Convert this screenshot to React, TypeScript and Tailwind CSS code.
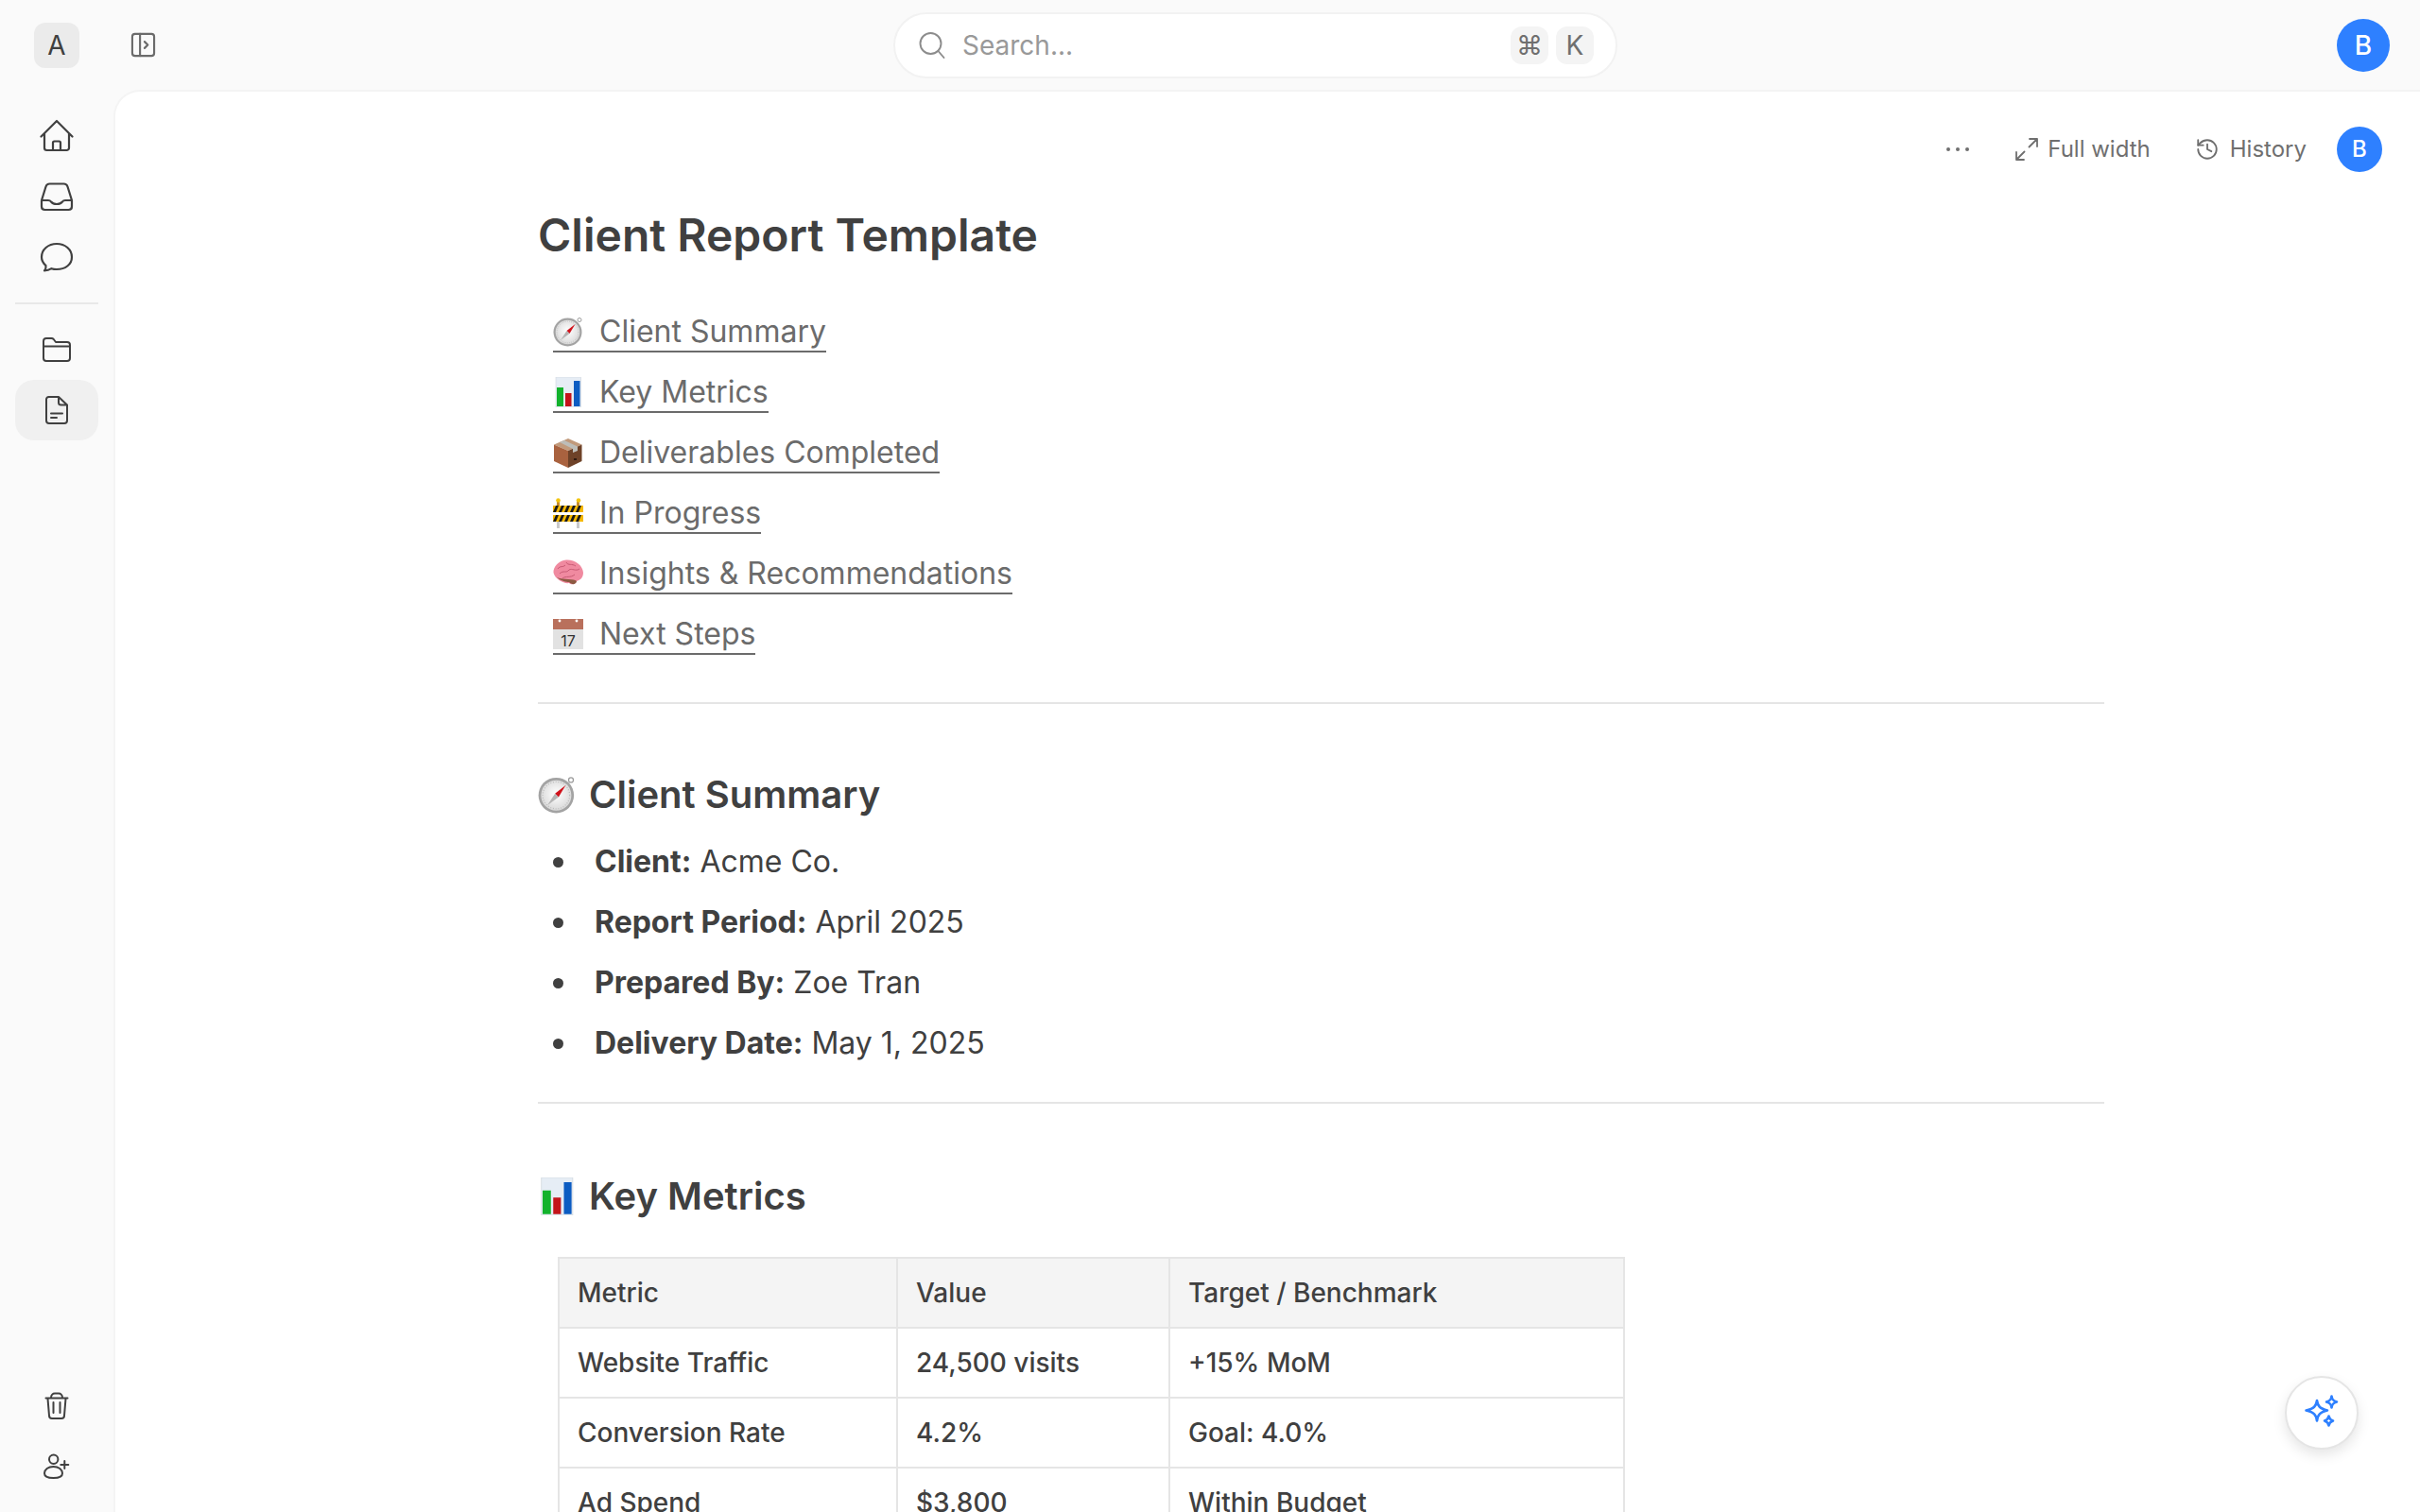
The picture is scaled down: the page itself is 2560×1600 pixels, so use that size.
import { History } from 'lucide-react';
import type { ReactNode } from 'react';

function Icon({ d, className = 'w-9 h-9 text-[#404040]', width = 2.2 }: { d: string; className?: string; width?: number }) {
  return (
    <svg viewBox="0 0 36 36" fill="none" stroke="currentColor" strokeWidth={width} strokeLinecap="round" strokeLinejoin="round" className={className}>
      <path d={d} />
    </svg>
  );
}

const homePath = 'M1.5 18.5 L18 2 L34.5 18.5 M5 15 V30.5 a2.5 2.5 0 0 0 2.5 2.5 H28.5 a2.5 2.5 0 0 0 2.5 -2.5 V15 M14 33 V25 a1.5 1.5 0 0 1 1.5 -1.5 H20.5 a1.5 1.5 0 0 1 1.5 1.5 V33';
const inboxPath = 'M2 22 L6.5 7.5 Q7.5 4.5 10.5 4.5 H25.5 Q28.5 4.5 29.5 7.5 L34 22 V28.5 Q34 32 30.5 32 H5.5 Q2 32 2 28.5 Z M2 22 H9 Q11 22 12 23.5 Q14 26 18 26 Q22 26 24 23.5 Q25 22 27 22 H34';
const chatPath = 'M18 4 C27 4 34 10 34 18 C34 26 27 31 18 31 C16 31 14 30.7 12.5 30.2 C10.5 31.5 8 32.5 5 32.5 C6.2 31 6.8 29 6.5 27 C3.8 24.7 2 21.6 2 18 C2 10 9 4 18 4 Z';
const folderPath = 'M4 14 V9 a3 3 0 0 1 3 -3 H12.5 a3 3 0 0 1 2.2 1 L17 10 H29 a3 3 0 0 1 3 3 V27 a3 3 0 0 1 -3 3 H7 a3 3 0 0 1 -3 -3 Z M4 14.5 H32';
const filePath = 'M9.5 4 H20 L29 12.5 V29 a3 3 0 0 1 -3 3 H10 a3 3 0 0 1 -3 -3 V6.5 a2.5 2.5 0 0 1 2.5 -2.5 Z M20 4 V10 a2.5 2.5 0 0 0 2.5 2.5 H29 M12 21.5 H24 M12 26 H18';
const trashPath = 'M6.5 9.5 H29.5 M12 9 C12 6 14 4.5 16 4.5 H20 C22 4.5 24 6 24 9 M8.5 10 L10 28 a3 3 0 0 0 3 3 H23 a3 3 0 0 0 3 -3 L27.5 10 M14.5 14 V25 M21.5 14 V25';
const userPlusPath = 'M14.7 5.6 a4.7 4.7 0 1 1 0 9.4 a4.7 4.7 0 1 1 0 -9.4 Z M5 25 C5 21 9 18 14.5 18 C20 18 24 21 24 25 C24 29 20 30 14.5 30 C9 30 5 29 5 25 Z M26.3 12 V20 M22.3 16 H30.3';

function CompassEmoji({ className }: { className: string }) {
  return (
    <svg viewBox="0 0 32 32" className={className}>
      <defs>
        <radialGradient id="face" cx="50%" cy="45%" r="55%">
          <stop offset="0%" stopColor="#ffffff" />
          <stop offset="100%" stopColor="#d9d9d9" />
        </radialGradient>
      </defs>
      <circle cx="28" cy="3.5" r="2" fill="none" stroke="#9a9a9a" strokeWidth="1" />
      <circle cx="15.5" cy="16.5" r="15" fill="#a3a3a3" />
      <circle cx="15.5" cy="16.5" r="12.8" fill="url(#face)" />
      <circle cx="15.5" cy="16.5" r="11.4" fill="none" stroke="#bdbdbd" strokeWidth="1" strokeDasharray="0.8 1.4" />
      <path d="M14.5 15 L23.5 8 L17.5 18 Z" fill="#d0121b" />
      <path d="M14.5 15 L17.5 18 L8 25 Z" fill="#b5b5b5" />
    </svg>
  );
}

function ChartEmoji({ className }: { className: string }) {
  return (
    <svg viewBox="0 0 32 32" className={className}>
      <rect x="3" y="0" width="26.5" height="32" fill="#e6edf5" stroke="#cfd6dd" strokeWidth="0.6" />
      <rect x="4" y="11" width="7" height="20" fill="#12b22c" />
      <rect x="13" y="17" width="6.5" height="14" fill="#c4141a" />
      <rect x="22" y="4" width="6.5" height="27" fill="#0c5cc2" />
    </svg>
  );
}

function BoxEmoji({ className }: { className: string }) {
  return (
    <svg viewBox="0 0 32 32" className={className}>
      <path d="M16 1 L30.5 7.5 L16 14 L1 7.5 Z" fill="#c19a7b" />
      <path d="M1 7.5 L16 14 V32 L1 25 Z" fill="#a9623f" />
      <path d="M30.5 7.5 V25 L16 32 V14 Z" fill="#6e4228" />
      <path d="M7 5 L12 3 L26 9.5 V14 L21 16 V12 Z" fill="#bdbdb8" />
      <rect x="22" y="22" width="3" height="2" fill="#2e1a10" />
    </svg>
  );
}

function BarrierEmoji({ className }: { className: string }) {
  const stripes = [0, 6, 12, 18, 24];
  return (
    <svg viewBox="0 0 32 32" className={className}>
      <rect x="4" y="22" width="3" height="10" fill="#c9c9c9" />
      <rect x="25" y="22" width="3" height="10" fill="#c9c9c9" />
      <rect x="4" y="2" width="3" height="6" fill="#c58a2a" />
      <rect x="25" y="2" width="3" height="6" fill="#c58a2a" />
      <circle cx="5.5" cy="2.5" r="2.3" fill="#f2c511" />
      <circle cx="27" cy="2.5" r="2.3" fill="#f2c511" />
      {[8, 18].map(y => (
        <g key={y}>
          <rect x="0" y={y} width="32" height="7" fill="#f5b800" />
          {stripes.map(x => (
            <path key={x} d={`M${x} ${y + 7} L${x + 3} ${y} H${x + 6} L${x + 3} ${y + 7} Z`} fill="#1a1a1a" />
          ))}
        </g>
      ))}
    </svg>
  );
}

function BrainEmoji({ className }: { className: string }) {
  return (
    <svg viewBox="0 0 32 32" className={className}>
      <path d="M0.5 15 C0 9 6 2 14 1.5 C23 1 31.5 7 32 15 C32 21 28 23 25 24 C24 28 19 28 17 26 C12 27 2 22 0.5 15 Z" fill="#f08aa0" />
      <path d="M5 11 C8 7 10 10 13 7 M14 4 C16 8 20 5 24 8 M7 16 C11 12 14 16 17 12 C20 10 24 14 28 11 M10 21 C14 18 18 21 23 17" fill="none" stroke="#c85a74" strokeWidth="1" />
      <path d="M4 20 C9 24 14 25 17 25 C20 28 24 28 25 24 C22 21 12 23 4 20 Z" fill="#8c5a42" />
    </svg>
  );
}

function CalendarEmoji({ className }: { className: string }) {
  return (
    <svg viewBox="0 0 32 32" className={className}>
      <rect x="0" y="11" width="32" height="21" fill="#e2e2e2" />
      <rect x="0" y="0" width="32" height="11" fill="#b9705c" />
      <circle cx="7" cy="2" r="1.4" fill="#ffffff" />
      <circle cx="25" cy="2" r="1.4" fill="#ffffff" />
      <text x="16" y="29" textAnchor="middle" fontFamily="Inter, sans-serif" fontSize="16" fill="#333333">17</text>
    </svg>
  );
}

function Sparkles() {
  return (
    <svg viewBox="0 0 40 40" fill="none" stroke="#2e80ff" strokeWidth="2.6" strokeLinejoin="round" className="w-10 h-10">
      <path d="M15 7 C15.8 13 18 15.5 26 17.5 C18 19.5 15.8 22 15 28.5 C14.2 22 12 19.5 3.5 17.5 C12 15.5 14.2 13 15 7 Z" />
      <path d="M30.5 2.5 C31 6 32 7.5 36 8.5 C32 9.5 31 11 30.5 14.5 C30 11 29 9.5 25 8.5 C29 7.5 30 6 30.5 2.5 Z" />
      <path d="M27.5 23.5 C28 26.5 28.8 27.5 32 28.5 C28.8 29.5 28 30.5 27.5 33.5 C27 30.5 26.2 29.5 23 28.5 C26.2 27.5 27 26.5 27.5 23.5 Z" />
    </svg>
  );
}

const tocItems: { label: string; emoji: (p: { className: string }) => ReactNode }[] = [
  { label: 'Client Summary', emoji: CompassEmoji },
  { label: 'Key Metrics', emoji: ChartEmoji },
  { label: 'Deliverables Completed', emoji: BoxEmoji },
  { label: 'In Progress', emoji: BarrierEmoji },
  { label: 'Insights & Recommendations', emoji: BrainEmoji },
  { label: 'Next Steps', emoji: CalendarEmoji },
];

const summary = [
  ['Client:', 'Acme Co.'],
  ['Report Period:', 'April 2025'],
  ['Prepared By:', 'Zoe Tran'],
  ['Delivery Date:', 'May 1, 2025'],
];

const metrics = [
  ['Website Traffic', '24,500 visits', '+15% MoM'],
  ['Conversion Rate', '4.2%', 'Goal: 4.0%'],
  ['Ad Spend', '$3,800', 'Within Budget'],
];

export default function App() {
  return (
    <div className="relative h-screen overflow-hidden bg-[#fafafa] font-['Inter','DejaVu_Sans',sans-serif] text-[#404040]">
      {/* top bar */}
      <header className="h-[95px] flex items-center pl-[36px] pr-[32px]">
        <div className="flex items-center w-[909px] gap-[54px]">
          <div className="w-12 h-12 rounded-xl bg-[#ebebeb] flex items-center justify-center text-[28px]">A</div>
          <svg viewBox="0 0 28 28" fill="none" stroke="#6b6b6b" strokeWidth="2.2" strokeLinecap="round" strokeLinejoin="round" className="w-[27px] h-[27px]">
            <rect x="2" y="2" width="24" height="24" rx="3" />
            <path d="M10.5 2 V26 M15.5 10.5 L19 14 L15.5 17.5" />
          </svg>
        </div>
        <div className="w-[766px] h-[70px] rounded-[35px] bg-white border-2 border-[#f2f2f2] flex items-center pl-[24px] pr-[23px]">
          <svg viewBox="0 0 30 30" fill="none" stroke="#8c8c8c" strokeWidth="1.9" strokeLinecap="round" className="w-[30px] h-[30px]">
            <circle cx="13.5" cy="13" r="11" />
            <path d="M21.5 21 L27.5 28" />
          </svg>
          <span className="ml-[17px] flex-1 text-[28px] text-[#999999]">Search...</span>
          <div className="flex gap-2 text-[28px] text-[#6f6f6f]">
            <span className="w-10 h-10 rounded-xl bg-[#f4f4f4] flex items-center justify-center">⌘</span>
            <span className="w-10 h-10 rounded-xl bg-[#f4f4f4] flex items-center justify-center">K</span>
          </div>
        </div>
        <div className="flex-1 flex justify-end">
          <div className="w-14 h-14 rounded-full bg-[#2e80ff] text-white flex items-center justify-center text-[28px] font-medium">B</div>
        </div>
      </header>

      <div className="flex h-[calc(100vh-95px)]">
        {/* side rail */}
        <aside className="w-[120px] shrink-0 flex flex-col items-center pt-[31px] pb-[30px]">
          <div className="w-[88px] flex flex-col items-center gap-[28px]">
            <Icon d={homePath} />
            <Icon d={inboxPath} />
            <Icon d={chatPath} />
          </div>
          <div className="w-[88px] h-[2px] bg-[#e8e8e8] mt-[30px]" />
          <div className="w-[88px] flex flex-col items-center mt-[16px]">
            <div className="h-[64px] flex items-center justify-center">
              <Icon d={folderPath} width={2} />
            </div>
            <div className="w-[88px] h-[64px] rounded-[20px] bg-[#f0f0f0] flex items-center justify-center">
              <Icon d={filePath} width={2} />
            </div>
          </div>
          <div className="mt-auto flex flex-col items-center gap-[28px]">
            <Icon d={trashPath} width={2} />
            <Icon d={userPlusPath} width={2} />
          </div>
        </aside>

        {/* document panel */}
        <main className="flex-1 bg-white rounded-tl-[28px] border-l-2 border-t-2 border-[#f4f4f4] overflow-hidden">
          <div className="flex justify-end items-center pt-[37px] pr-[40px] text-[24px] text-[#6f6f6f]">
            <div className="flex gap-[4px] mr-[48px]">
              <span className="w-1 h-1 mx-[1px] rounded-full bg-[#6f6f6f]" />
              <span className="w-1 h-1 mx-[1px] rounded-full bg-[#6f6f6f]" />
              <span className="w-1 h-1 mx-[1px] rounded-full bg-[#6f6f6f]" />
            </div>
            <svg viewBox="0 0 24 24" fill="none" stroke="#6f6f6f" strokeWidth="1.8" strokeLinecap="round" strokeLinejoin="round" className="w-6 h-6 mr-[10px]">
              <path d="M14.5 9.5 L23 1 M15 1 H23 V9 M9.5 14.5 L1 23 M1 15 V23 H9" />
            </svg>
            <span className="mr-[47px]">Full width</span>
            <History strokeWidth={1.7} className="w-[26px] h-[26px] mr-[11px]" />
            <span className="mr-[32px]">History</span>
            <div className="w-12 h-12 rounded-full bg-[#2e80ff] text-white flex items-center justify-center text-[24px] font-medium">B</div>
          </div>

          <article className="ml-[447px] w-[1657px]">
            <h1 className="mt-[35px] text-[48px] leading-[64px] font-semibold">Client Report Template</h1>

            <nav className="mt-[39px] pl-[16px]">
              {tocItems.map(({ label, emoji: Emoji }) => (
                <div key={label} className="h-16">
                  <a className="inline-flex items-center gap-[17px] h-[53px] pt-[10px] border-b-2 border-[#6b6b6b] text-[32px] text-[#6b6b6b]">
                    <Emoji className="w-8 h-8" />
                    {label}
                  </a>
                </div>
              ))}
            </nav>

            <hr className="mt-[39px] border-0 h-[2px] bg-[#e5e5e5]" />

            <h2 className="mt-[68px] flex items-center gap-[14px] text-[40px] leading-[56px] font-semibold">
              <CompassEmoji className="w-10 h-10" />
              Client Summary
            </h2>

            <ul className="mt-[11px]">
              {summary.map(([k, v]) => (
                <li key={k} className="h-16 flex items-center text-[32px]">
                  <span className="w-[11px] h-[11px] rounded-full bg-[#404040] ml-[16px] mr-[33px] shrink-0" />
                  <span>
                    <strong className="font-bold">{k}</strong> {v}
                  </span>
                </li>
              ))}
            </ul>

            <hr className="mt-[30px] border-0 h-[2px] bg-[#e5e5e5]" />

            <h2 className="mt-[70px] flex items-center gap-[14px] text-[40px] leading-[56px] font-semibold">
              <ChartEmoji className="w-10 h-10" />
              Key Metrics
            </h2>

            <table className="mt-[36px] ml-[21px] w-[1127px] table-fixed border-collapse text-[28px] font-medium">
              <colgroup>
                <col className="w-[358px]" />
                <col className="w-[288px]" />
                <col className="w-[481px]" />
              </colgroup>
              <thead>
                <tr className="h-[74px] bg-[#f4f4f4]">
                  {['Metric', 'Value', 'Target / Benchmark'].map(h => (
                    <th key={h} className="border-2 border-[#e5e5e5] px-[19px] text-left font-medium">{h}</th>
                  ))}
                </tr>
              </thead>
              <tbody>
                {metrics.map(row => (
                  <tr key={row[0]} className="h-[74px]">
                    {row.map(cell => (
                      <td key={cell} className="border-2 border-[#e5e5e5] px-[19px]">{cell}</td>
                    ))}
                  </tr>
                ))}
              </tbody>
            </table>
          </article>
        </main>
      </div>

      <button className="absolute right-[65px] bottom-[66px] w-[78px] h-[78px] rounded-full bg-white border-2 border-[#e5e5e5] shadow-[0_6px_14px_rgba(0,0,0,0.1)] flex items-center justify-center">
        <Sparkles />
      </button>
    </div>
  );
}
